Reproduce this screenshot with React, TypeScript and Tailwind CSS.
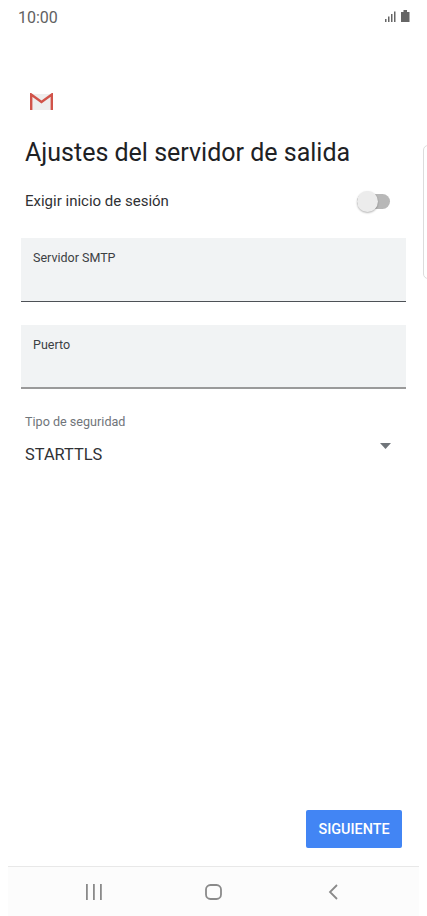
import React from "react"

function Field({ label, lineClass }: { label: string; lineClass: string }) {
    return (
        <div className={`mx-[21px] h-[64px] bg-[#f1f3f4] pl-3 pt-[12px] ${lineClass}`}>
            <div className="text-[12.5px] leading-[16px] text-[#3c4043]">{label}</div>
        </div>
    )
}

export default function App() {
    return (
        <div className="relative w-[427px] h-[916px] overflow-hidden bg-white font-['Roboto',sans-serif] flex flex-col">
            {/* status bar */}
            <div className="h-[34px] flex items-center justify-between pl-[18px] pr-[17px] shrink-0">
                <span className="text-[16px] text-[#616161] mt-[1px]">10:00</span>
                <svg width="25" height="14" viewBox="0 0 25 14" fill="#666666" className="mt-[-2px]">
                    <rect x="0" y="10" width="1.5" height="3" />
                    <rect x="3" y="7.5" width="1.5" height="5.5" />
                    <rect x="6" y="5" width="1.5" height="8" />
                    <rect x="9" y="2.5" width="1.5" height="10.5" />
                    <path d="M16 3h2.5V1h3.5V3h2.5v10H16z" />
                </svg>
            </div>

            {/* gmail logo */}
            <div className="pl-[30px] pt-[59px] shrink-0">
                <svg width="23" height="17" viewBox="0 0 23 17" className="block">
                    <rect x="1" y="1" width="21" height="16" fill="#eeeeee" />
                    <path d="M1.2 17V1.5L11.5 9L21.8 1.5V17" fill="none" stroke="#d1544a" strokeWidth="2.4" />
                </svg>
            </div>

            <h1 className="pl-[25px] mt-[26px] text-[25px] leading-[34px] text-[#202124] font-normal whitespace-nowrap">
                Ajustes del servidor de salida
            </h1>

            <div className="mt-[14px] h-[34px] pl-[25px] pr-[37px] flex items-center justify-between">
                <span className="text-[15px] text-[#303134]">Exigir inicio de sesión</span>
                <div className="relative w-[33px] h-[15px] rounded-full bg-[#b8b8b8]">
                    <div className="absolute left-0 top-[-3px] w-[21px] h-[21px] rounded-full bg-[#ececec] shadow-[0_1px_2px_rgba(0,0,0,0.3)]" />
                </div>
            </div>

            <div className="mt-[20px]">
                <Field label="Servidor SMTP" lineClass="border-b border-[#4d5156]" />
            </div>
            <div className="mt-[23px]">
                <Field label="Puerto" lineClass="border-b-2 border-[#9a9a9a]" />
            </div>

            <div className="mt-[24px] pl-[25px] text-[12.6px] leading-[18px] text-[#70757a]">Tipo de seguridad</div>
            <div className="mt-[13px] pl-[25px] pr-[36px] flex justify-between">
                <span className="text-[16.4px] leading-[22px] text-[#303134]">STARTTLS</span>
                <svg width="11" height="6" viewBox="0 0 11 6" fill="#70757a" className="mt-[-1px]">
                    <path d="M0 0h11L5.5 6z" />
                </svg>
            </div>

            <div className="flex-1 flex items-end justify-end pr-[25px] pb-[18px]">
                <button className="w-[96px] h-[38px] pt-[1px] rounded-[2px] bg-[#4285f4] text-white text-[14.4px] font-medium">
                    SIGUIENTE
                </button>
            </div>

            {/* nav bar */}
            <div className="mx-[8px] h-[50px] shrink-0 flex items-center bg-[#fcfcfc] border-t border-[#e8e8e8]">
                <div className="ml-[78px]">
                    <svg width="16" height="16" viewBox="0 0 16 16" fill="#8a8a8a" className="block">
                        <rect x="0" y="0" width="1.8" height="16" />
                        <rect x="7" y="0" width="1.8" height="16" />
                        <rect x="14" y="0" width="1.8" height="16" />
                    </svg>
                </div>
                <div className="ml-[103px]">
                    <svg width="17" height="16" viewBox="0 0 17 16" fill="none" stroke="#8a8a8a" strokeWidth="1.8" className="block">
                        <rect x="1" y="1" width="15" height="14" rx="4.5" />
                    </svg>
                </div>
                <div className="ml-[106px]">
                    <svg width="10" height="16" viewBox="0 0 10 16" fill="none" stroke="#8a8a8a" strokeWidth="1.8" className="block">
                        <path d="M9 1L2 8l7 7" />
                    </svg>
                </div>
            </div>

            {/* edge panel handle */}
            <div className="absolute left-[423px] top-[145px] w-[8px] h-[134px] rounded-l-[5px] border border-[#dcdcdc] bg-white" />
        </div>
    )
}
